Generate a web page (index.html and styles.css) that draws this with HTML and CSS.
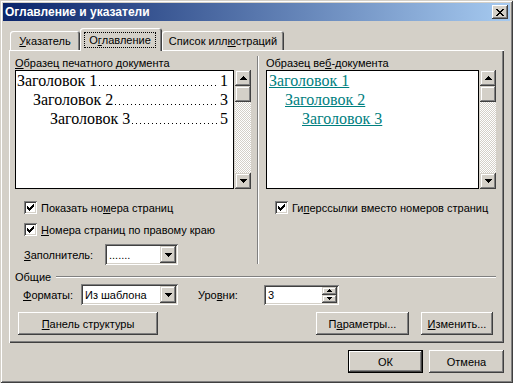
FILE: index.html
```html
<!DOCTYPE html>
<html lang="ru">
<head>
<meta charset="utf-8">
<title>Оглавление и указатели</title>
<link rel="stylesheet" href="styles.css">
</head>
<body>
<div class="window">
  <div class="titlebar">
    <span class="title">Оглавление и указатели</span>
    <span class="close"><svg width="8" height="7" viewBox="0 0 8 7" shape-rendering="crispEdges"><path d="M0 0h2v1h-2zM6 0h2v1h-2zM1 1h2v1h-2zM5 1h2v1h-2zM2 2h4v1h-4zM3 3h2v1h-2zM2 4h4v1h-4zM1 5h2v1h-2zM5 5h2v1h-2zM0 6h2v1h-2zM6 6h2v1h-2z" fill="#000"/></svg></span>
  </div>
  <div class="body">
    <div class="tabs">
      <div class="tab t1"><span><u>У</u>казатель</span></div>
      <div class="tab sel"><span class="focus">О<u>г</u>лавление</span></div>
      <div class="tab t3"><span>Список илл<u>ю</u>страций</span></div>
    </div>
    <div class="panel">
      <div class="cols">
        <div class="col left">
          <div class="label"><u>О</u>бразец печатного документа</div>
          <div class="box">
            <div class="pane print">
              <div class="toc l1"><span>Заголовок 1</span><span class="dots"></span><span>1</span></div>
              <div class="toc l2"><span>Заголовок 2</span><span class="dots"></span><span>3</span></div>
              <div class="toc l3"><span>Заголовок 3</span><span class="dots"></span><span>5</span></div>
            </div>
            <div class="scroll">
              <span class="sbtn"><svg width="7" height="4" viewBox="0 0 7 4" shape-rendering="crispEdges"><path d="M3 0h1v1h1v1h1v1h1v1H0V3h1V2h1V1h1z"/></svg></span>
              <span class="sbtn thumb"></span>
              <span class="track"></span>
              <span class="sbtn"><svg width="7" height="4" viewBox="0 0 7 4" shape-rendering="crispEdges"><path d="M0 0h7v1H6v1H5v1H4v1H3V3H2V2H1V1H0z"/></svg></span>
            </div>
          </div>
          <div class="check c1"><span class="cb"><svg width="7" height="7" viewBox="0 0 7 7" shape-rendering="crispEdges"><path d="M6 0h1v1h-1zM5 1h2v1h-2zM0 2h1v1h-1zM4 2h3v1h-3zM0 3h2v1h-2zM3 3h3v1h-3zM0 4h5v1h-5zM1 5h3v1h-3zM2 6h1v1h-1z"/></svg></span><span>Показать но<u>м</u>ера страниц</span></div>
          <div class="check c2"><span class="cb"><svg width="7" height="7" viewBox="0 0 7 7" shape-rendering="crispEdges"><path d="M6 0h1v1h-1zM5 1h2v1h-2zM0 2h1v1h-1zM4 2h3v1h-3zM0 3h2v1h-2zM3 3h3v1h-3zM0 4h5v1h-5zM1 5h3v1h-3zM2 6h1v1h-1z"/></svg></span><span><u>Н</u>омера страниц по правому краю</span></div>
          <div class="fillrow">
            <span class="fill-label"><u>З</u>аполнитель:</span>
            <div class="combo fill"><span class="ctext">.......</span><span class="dd"><svg width="7" height="4" viewBox="0 0 7 4" shape-rendering="crispEdges"><path d="M0 0h7v1H6v1H5v1H4v1H3V3H2V2H1V1H0z"/></svg></span></div>
          </div>
        </div>
        <div class="vsep"></div>
        <div class="col right">
          <div class="label">Образец ве<u>б</u>-документа</div>
          <div class="box">
            <div class="pane web">
              <div class="link l1"><a>Заголовок 1</a></div>
              <div class="link l2"><a>Заголовок 2</a></div>
              <div class="link l3"><a>Заголовок 3</a></div>
            </div>
            <div class="scroll">
              <span class="sbtn"><svg width="7" height="4" viewBox="0 0 7 4" shape-rendering="crispEdges"><path d="M3 0h1v1h1v1h1v1h1v1H0V3h1V2h1V1h1z"/></svg></span>
              <span class="sbtn thumb"></span>
              <span class="track"></span>
              <span class="sbtn"><svg width="7" height="4" viewBox="0 0 7 4" shape-rendering="crispEdges"><path d="M0 0h7v1H6v1H5v1H4v1H3V3H2V2H1V1H0z"/></svg></span>
            </div>
          </div>
          <div class="check c1"><span class="cb"><svg width="7" height="7" viewBox="0 0 7 7" shape-rendering="crispEdges"><path d="M6 0h1v1h-1zM5 1h2v1h-2zM0 2h1v1h-1zM4 2h3v1h-3zM0 3h2v1h-2zM3 3h3v1h-3zM0 4h5v1h-5zM1 5h3v1h-3zM2 6h1v1h-1z"/></svg></span><span>Ги<u>п</u>ерссылки вместо номеров страниц</span></div>
        </div>
      </div>
      <div class="group-head"><span>Общие</span><span class="hline"></span></div>
      <div class="formats">
        <span class="fmt-label"><u>Ф</u>орматы:</span>
        <div class="combo fmt"><span class="ctext">Из шаблона</span><span class="dd"><svg width="7" height="4" viewBox="0 0 7 4" shape-rendering="crispEdges"><path d="M0 0h7v1H6v1H5v1H4v1H3V3H2V2H1V1H0z"/></svg></span></div>
        <span class="lvl-label">Уро<u>в</u>ни:</span>
        <div class="spin"><span class="ctext">3</span>
          <span class="spbtns">
            <span class="spb"><svg width="5" height="3" viewBox="0 0 5 3" shape-rendering="crispEdges"><path d="M2 0h1v1h1v1h1v1H0V2h1V1h1z"/></svg></span>
            <span class="spb"><svg width="5" height="3" viewBox="0 0 5 3" shape-rendering="crispEdges"><path d="M0 0h5v1H4v1H3v1H2V2H1V1H0z"/></svg></span>
          </span>
        </div>
      </div>
      <div class="btnrow">
        <span class="btn outline"><u>П</u>анель структуры</span>
        <span class="grow"></span>
        <span class="btn params">П<u>а</u>раметры...</span>
        <span class="btn change"><u>И</u>зменить...</span>
      </div>
    </div>
    <div class="footer">
      <span class="btn dlg default">ОК</span>
      <span class="btn dlg">Отмена</span>
    </div>
  </div>
</div>
</body>
</html>
```

FILE: styles.css
```css
* { box-sizing: border-box; }
html, body { margin: 0; padding: 0; }
body {
  width: 513px;
  height: 383px;
  overflow: hidden;
  background: #d4d0c8;
  font: 11px "Liberation Sans", Arial, sans-serif;
  color: #000;
}
u { text-decoration: underline; }

.window {
  width: 513px;
  height: 383px;
  padding: 3px;
  background: #d4d0c8;
  box-shadow: inset 1px 1px #d4d0c8, inset -1px -1px #404040, inset 2px 2px #fff, inset -2px -2px #808080;
  display: flex;
  flex-direction: column;
}

.titlebar {
  height: 18px;
  flex: none;
  display: flex;
  align-items: center;
  justify-content: space-between;
  padding: 0 2px;
  background: linear-gradient(to right, #0a246a, #a6caf0);
  color: #fff;
  font-weight: bold;
  font-size: 12px;
}
.title { line-height: 18px; }
.close {
  width: 16px;
  height: 14px;
  background: #d4d0c8;
  box-shadow: inset -1px -1px #404040, inset 1px 1px #fff, inset -2px -2px #808080;
  display: flex;
  align-items: center;
  justify-content: center;
}
.close svg { display: block; }

.body {
  padding: 7px 6px 0 6px;
  display: flex;
  flex-direction: column;
}

/* tabs */
.tabs {
  display: flex;
  align-items: flex-end;
  height: 22px;
  padding-left: 1px;
  position: relative;
  z-index: 1;
}
.tab {
  height: 19px;
  background: #d4d0c8;
  border-radius: 3px 3px 0 0;
  box-shadow: inset 1px 1px #fff, inset -1px 0 #404040, inset -2px 0 #808080;
  display: flex;
  align-items: center;
  justify-content: center;
  padding-top: 1px;
}
.t1 { width: 70px; }
.t3 { width: 122px; }
.sel {
  width: 82px;
  height: 23px;
  margin-bottom: -1px;
  align-items: flex-start;
  padding-top: 4px;
  padding-right: 2px;
}
.focus {
  width: 72px;
  height: 16px;
  border: 1px dotted #000;
  display: flex;
  align-items: center;
  justify-content: center;
}

/* panel */
.panel {
  width: 495px;
  height: 293px;
  flex: none;
  box-shadow: inset 1px 1px #fff, inset -1px -1px #404040, inset -2px -2px #808080;
  padding: 7px 6px 0 6px;
  display: flex;
  flex-direction: column;
}
.cols {
  display: flex;
  height: 207px;
  flex: none;
}
.col { display: flex; flex-direction: column; }
.left { width: 236px; }
.right { width: 230px; }
.label { height: 13px; line-height: 13px; white-space: nowrap; }

.vsep {
  width: 2px;
  margin: -1px 7px 0 6px;
  box-shadow: inset 1px 0 #808080, inset -1px 0 #fff;
}

.box { display: flex; height: 119px; flex: none; }
.pane {
  border: 1px solid #000;
  background: #fff;
  font: 16px "Liberation Serif", "Times New Roman", serif;
  line-height: 19px;
  overflow: hidden;
}
.print { width: 219px; padding: 0 5px 0 1px; }
.web { width: 213px; padding: 0 4px 0 2px; }
.toc { display: flex; white-space: nowrap; }
.toc .dots {
  flex: 1;
  min-width: 0;
  margin: 0 1px 0 2px;
  background-image: linear-gradient(to right, #000 1px, transparent 1px);
  background-size: 4px 1px;
  background-repeat: repeat-x;
  background-position: left 0 bottom 4px;
}
.l2 { padding-left: 16px; }
.l3 { padding-left: 33px; }
.link a { color: #008080; text-decoration: underline; }

.scroll {
  width: 16px;
  margin-left: 1px;
  display: flex;
  flex-direction: column;
}
.sbtn {
  width: 16px;
  height: 16px;
  flex: none;
  background: #d4d0c8;
  box-shadow: inset -1px -1px #404040, inset 1px 1px #d4d0c8, inset -2px -2px #808080, inset 2px 2px #fff;
  display: flex;
  align-items: center;
  justify-content: center;
}
.sbtn svg, .dd svg, .spb svg { display: block; fill: #000; }
.track {
  flex: 1;
  background: repeating-conic-gradient(#d4d0c8 0 25%, #fff 0 50%) 0 0 / 2px 2px;
}

/* checkboxes */
.check {
  display: flex;
  align-items: center;
  gap: 4px;
  margin-left: 9px;
  height: 13px;
  white-space: nowrap;
}
.c1 { margin-top: 12px; }
.c2 { margin-top: 9px; }
.cb {
  width: 13px;
  height: 13px;
  flex: none;
  background: #fff;
  box-shadow: inset 1px 1px #808080, inset -1px -1px #fff, inset 2px 2px #404040, inset -2px -2px #d4d0c8;
  display: flex;
  align-items: center;
  justify-content: center;
}
.cb svg { display: block; fill: #000; }

.fillrow {
  display: flex;
  align-items: center;
  margin-top: 8px;
  margin-left: 9px;
  height: 21px;
}
.fill-label { width: 81px; }

.combo, .spin {
  height: 21px;
  background: #fff;
  box-shadow: inset 1px 1px #808080, inset -1px -1px #fff, inset 2px 2px #404040, inset -2px -2px #d4d0c8;
  display: flex;
  align-items: center;
  padding: 2px;
}
.ctext { flex: 1; padding-left: 2px; white-space: nowrap; }
.fill { width: 73px; }
.fmt { width: 97px; }
.dd {
  width: 16px;
  height: 17px;
  background: #d4d0c8;
  box-shadow: inset -1px -1px #404040, inset 1px 1px #d4d0c8, inset -2px -2px #808080, inset 2px 2px #fff;
  display: flex;
  align-items: center;
  justify-content: center;
}

.group-head {
  display: flex;
  align-items: center;
  margin-top: 6px;
  height: 13px;
}
.hline {
  flex: 1;
  height: 2px;
  margin: 0 2px 0 5px;
  border-top: 1px solid #808080;
  border-bottom: 1px solid #fff;
}

.formats {
  display: flex;
  align-items: center;
  margin-top: 1px;
  margin-left: 8px;
  height: 21px;
}
.fmt-label { width: 58px; }
.lvl-label { width: 66px; margin-left: 20px; }
.spin { width: 75px; height: 20px; }
.spbtns { display: flex; flex-direction: column; }
.spb {
  width: 15px;
  height: 8px;
  background: #d4d0c8;
  box-shadow: inset -1px -1px #404040, inset 1px 1px #d4d0c8, inset -2px -2px #808080, inset 2px 2px #fff;
  display: flex;
  align-items: center;
  justify-content: center;
}

.btnrow {
  display: flex;
  margin-top: 7px;
  height: 23px;
}
.grow { flex: 1; }
.btn {
  height: 23px;
  background: #d4d0c8;
  box-shadow: inset -1px -1px #404040, inset 1px 1px #fff, inset -2px -2px #808080, inset 2px 2px #d4d0c8;
  display: flex;
  align-items: center;
  justify-content: center;
  white-space: nowrap;
}
.outline { width: 140px; margin-left: 3px; }
.params { width: 93px; }
.change { width: 72px; margin-left: 12px; margin-right: 5px; }

.footer {
  display: flex;
  justify-content: flex-end;
  gap: 6px;
  margin-top: 7px;
}
.dlg { width: 75px; }
.default {
  border: 1px solid #000;
}
```
